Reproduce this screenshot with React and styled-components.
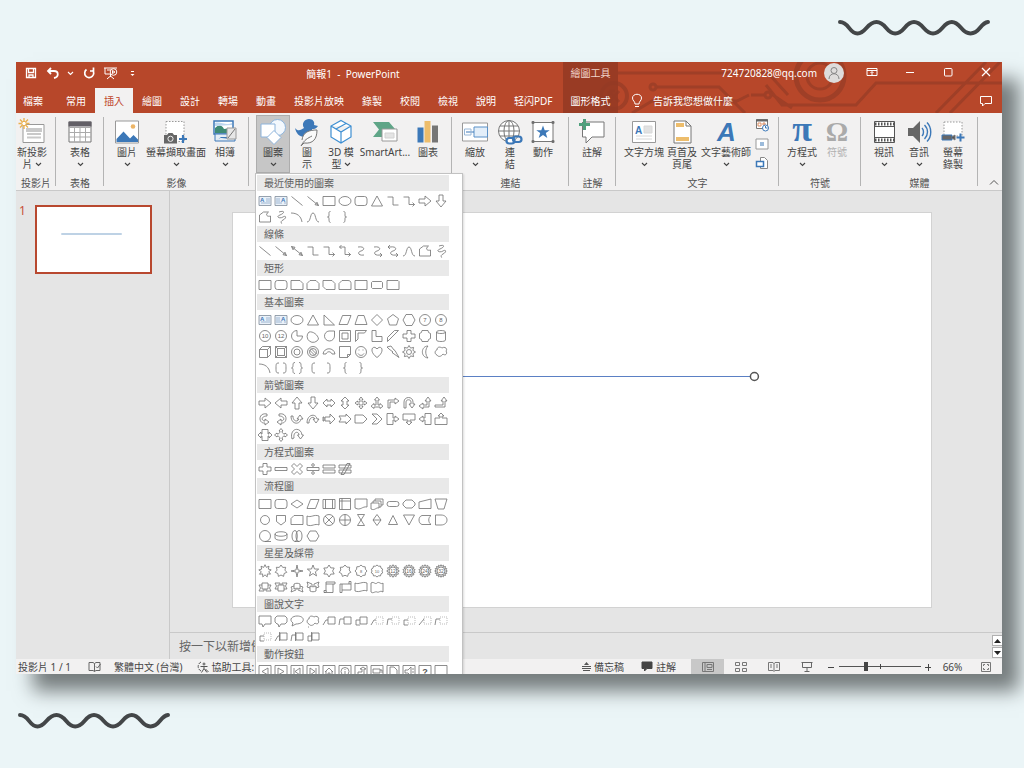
import React from 'react';
import styled, { createGlobalStyle, css } from 'styled-components';

const color = {
  page: '#ebf5f7',
  brand: '#b7472a',
  brandDark: '#943a24',
  brandLine: '#9f3f27',
  ribbon: '#f2f1f1',
  work: '#e5e5e5',
  line: '#c9c9c9',
  text: '#444444',
  blue: '#3c78b8',
  grey: '#767676',
};

const GlobalStyle = createGlobalStyle`
  * { box-sizing: border-box; }
  body {
    margin: 0;
    background: ${color.page};
    color: ${color.text};
    font: 10px/12px "Noto Sans", "Noto Sans CJK TC", sans-serif;
  }
  button, input { font: inherit; color: inherit; }
  svg { display: block; flex: none; }
`;

const plainButton = css`
  border: 0;
  padding: 0;
  background: none;
  white-space: nowrap;
`;

const Page = styled.div`
  display: flex;
  flex-direction: column;
  min-height: 100vh;
`;
const TopDecor = styled.div`
  display: flex;
  justify-content: flex-end;
  padding: 18px 32px 24px;
`;
const BottomDecor = styled.div`
  padding: 37px 16px;
`;
const AppWindow = styled.main`
  flex: 1;
  display: flex;
  flex-direction: column;
  margin: 0 22px 0 16px;
  overflow: hidden;
  background: ${color.work};
  box-shadow: 17px 17px 18px #757c7d;
`;

/* Title bar and tabs */
const Header = styled.header`
  position: relative;
  display: grid;
  grid-template-columns: minmax(0, 547fr) 55px minmax(0, 384fr);
  grid-template-rows: 26px 25px;
  background: ${color.brand};
  color: #fff;
`;
const Circuit = styled.svg`
  position: absolute;
  top: 0;
  right: 0;
  width: 440px;
  height: 51px;
`;
const HeaderCell = styled.div`
  position: relative;
  display: flex;
  align-items: ${p => p.$stretch ? 'stretch' : 'center'};
`;
const QuickAccess = styled.div`
  display: flex;
  align-items: center;
  width: 127px;
  padding: 0 2px 4px 7px;
  justify-content: space-between;
`;
const IconButton = styled.button`
  ${plainButton}
  display: flex;
  align-items: center;
  justify-content: center;
  width: ${p => p.$w || 16}px;
  height: 16px;
`;
const DocTitle = styled.h1`
  flex: 1;
  margin: 0;
  padding-bottom: 2px;
  font-size: 10px;
  font-weight: 400;
  text-align: center;
  white-space: pre;
`;
const ContextCell = styled.div`
  position: relative;
  display: flex;
  align-items: center;
  justify-content: center;
  background: ${color.brandDark}dd;
  color: #f1d5cc;
  padding-bottom: 4px;
`;
const Account = styled.div`
  display: flex;
  align-items: center;
  gap: 7px;
  margin: 0 12px 4px auto;
`;
const Avatar = styled.span`
  width: 20px;
  height: 20px;
  border-radius: 50%;
  background: #dedcdb;
`;
const WindowButtons = styled.div`
  display: flex;
  gap: 6px;
  padding-bottom: 6px;
`;
const Tab = styled.button`
  ${plainButton}
  padding: 0 9px;
  background: ${p => p.$active ? color.ribbon : 'none'};
  color: ${p => p.$active ? '#c0452a' : '#fff'};
  &:first-child { padding: 0 14px 0 7px; }
`;
const ContextTab = styled(Tab)`
  position: relative;
  background: ${color.brandDark}dd;
  &:first-child, & { padding: 0; }
`;
const TellMe = styled.button`
  ${plainButton}
  display: flex;
  align-items: center;
  gap: 10px;
  margin-left: 13px;
`;
const CommentButton = styled(IconButton)`
  margin-left: auto;
`;

/* Ribbon */
const Ribbon = styled.div`
  display: flex;
  height: 78px;
  background: ${color.ribbon};
  border-bottom: 1px solid ${color.line};
`;
const Group = styled.section`
  position: relative;
  flex: ${p => p.$w} 1 0;
  min-width: 0;
  display: flex;
  flex-direction: column;
  justify-content: space-between;
  padding: 2px 0 1px;
  &::after {
    content: '';
    position: absolute;
    inset: 4px 0 4px auto;
    border-right: 1px solid #b4b4b4;
  }
`;
const GroupTools = styled.div`
  display: flex;
  padding-left: ${p => p.$pad}px;
`;
const GroupLabel = styled.div`
  text-align: center;
  white-space: nowrap;
  color: #505050;
`;
const ToolSlot = styled.div`
  position: relative;
  flex: none;
  width: ${p => p.$w}px;
`;
const ToolButton = styled.button`
  ${plainButton}
  width: 100%;
  height: 58px;
  padding-top: 3px;
  display: flex;
  flex-direction: column;
  align-items: center;
  background: ${p => p.$active ? '#c6c6c6' : 'none'};
  outline: ${p => p.$active ? '1px solid #adadad' : 'none'};
  outline-offset: -1px;
  color: ${p => p.$dim ? '#b0b0b0' : color.text};
`;
const ToolLine = styled.span`
  display: flex;
  align-items: center;
  justify-content: center;
  gap: 2px;
  height: 12px;
`;
const SmallTools = styled.div`
  display: flex;
  flex-direction: column;
  gap: 3px;
  width: 20px;
  padding-top: 2px;
  align-items: center;
`;
const RibbonEnd = styled.div`
  flex: 24 1 0;
  min-width: 0;
  display: flex;
  align-items: flex-end;
  justify-content: flex-end;
`;

/* Shape gallery */
const Gallery = styled.div`
  position: absolute;
  z-index: 5;
  top: 100%;
  left: -1px;
  width: 208px;
  padding: 0 13px 0 1px;
  background: #fff;
  border: 1px solid #c2c2c2;
  box-shadow: 1px 1px 2px #00000022;
`;
const GalleryTitle = styled.h2`
  height: 18px;
  margin: 0;
  padding: 0 7px;
  display: flex;
  align-items: center;
  border: solid #fff;
  border-width: 1px 0;
  background: #e9e9e9;
  color: #606060;
  font-size: 10px;
  font-weight: 400;
`;
const ShapeGrid = styled.div`
  display: grid;
  grid-template-columns: repeat(12, 16px);
  padding-top: ${p => p.$tall ? 1 : 0}px;
`;
const ShapeButton = styled.button`
  ${plainButton}
  width: 16px;
  height: 16px;
`;

/* Work area */
const Workspace = styled.div`
  flex: 1;
  display: flex;
  min-height: 300px;
`;
const Thumbs = styled.nav`
  display: flex;
  align-items: flex-start;
  gap: 9px;
  width: 154px;
  padding: 14px 17px 0 3px;
  border-right: 1px solid ${color.line};
`;
const ThumbNumber = styled.span`
  width: 7px;
  color: #c8503a;
  font-size: 12px;
`;
const Thumb = styled.button`
  ${plainButton}
  flex: 1;
  height: 69px;
  border: 2px solid #b8482f;
  background: #fff;
`;
const Editor = styled.div`
  flex: 1;
  display: flex;
  flex-direction: column;
`;
const Stage = styled.div`
  flex: 1;
  display: flex;
  padding: 21px 70px 24px 62px;
`;
const Slide = styled.div`
  flex: 1;
  display: flex;
  background: #fff;
  border: 1px solid #d2d2d2;
`;
const Drawing = styled.svg`
  width: 100%;
  height: 100%;
`;
const Notes = styled.div`
  display: flex;
  justify-content: space-between;
  height: 27px;
  border-top: 1px solid ${color.line};
`;
const NotesInput = styled.input`
  flex: 1;
  border: 0;
  padding: 0 9px;
  background: none;
  font-size: 12px;
  &::placeholder { color: #666; opacity: 1; }
`;
const Scroller = styled.div`
  display: flex;
  flex-direction: column;
  justify-content: space-between;
  padding: 2px 0 1px;
`;
const ScrollButton = styled.button`
  ${plainButton}
  width: 10px;
  height: 11px;
  display: flex;
  align-items: center;
  justify-content: center;
  border: 1px solid #b0b0b0;
  border-right: 0;
  background: #fff;
`;

/* Status bar */
const StatusBar = styled.footer`
  display: flex;
  align-items: center;
  height: 15px;
  background: #f2f1f1;
  white-space: nowrap;
`;
const StatusLeft = styled.div`
  flex: 1;
  display: flex;
  align-items: center;
  gap: 13px;
  padding: 0 2px;
`;
const StatusButton = styled.button`
  ${plainButton}
  display: flex;
  align-items: center;
  gap: 3px;
  margin-right: ${p => p.$after || 0}px;
`;
const ViewButton = styled.button`
  ${plainButton}
  display: flex;
  align-items: center;
  justify-content: center;
  width: 33px;
  height: 15px;
  background: ${p => p.$active ? '#c8c8c8' : 'none'};
`;
const ZoomSlider = styled.input`
  appearance: none;
  width: 82px;
  height: 9px;
  margin: 0;
  background:
    linear-gradient(#444, #444) 41px 2px / 1px 5px no-repeat,
    linear-gradient(#555, #555) 0 4px / 100% 1px no-repeat;
  &::-webkit-slider-thumb {
    appearance: none;
    width: 4px;
    height: 9px;
    background: #444;
  }
`;
const ZoomValue = styled.button`
  ${plainButton}
  width: 35px;
`;

/* ---------- drawings ---------- */
const Wave = () => (
  <svg width="156" height="20" fill="none" stroke="#434648" strokeWidth="4" strokeLinecap="round" aria-hidden="true">
    <path d="M4 4C13 4 13 15.500 21.500 15.500S31 4 40.500 4S50 15.500 59.200 15.500S69 4 78 4S88 15.500 97 15.500S107 4 115.800 4S125 15.500 134.500 15.500S144 5 152 4" />
  </svg>
);
const Drawn = styled.svg`
  overflow: visible;
`;
const Ico = ({ w = 14, h, vb, s = 1, c = 'currentColor', children }) => (
  <Drawn width={w} height={h || w} viewBox={vb || `0 0 ${w} ${h || w}`} fill="none" stroke={c} strokeWidth={s} aria-hidden="true">{children}</Drawn>
);
const Chevron = ({ c = '#444' }) => <Ico w={7} h={5} c={c} s={1.1}><path d="M1 1l2.500 2.500L6 1" /></Ico>;

const B = color.blue;
const tool = {
  newSlide: <><path d="M5 6.500h21v18H5z" fill="#fff" stroke="#999" /><path d="M9 11h14v2H9zM9 16h14M9 19.500h14" stroke="#c9c9c9" strokeWidth="2" /><path d="M6 0v11M.5 5.500h11M2 1.500l8 8M10 1.500l-8 8" stroke="#eab04d" strokeWidth="1.300" /><circle cx="6" cy="5.500" r="2.200" fill="#fff" stroke="#eab04d" /></>,
  table: <><path d="M3 4h22v20H3z" fill="#fff" /><path d="M3 9.500h22M3 14.500h22M3 19h22M8.500 9v15M14 9v15M19.500 9v15" stroke="#aaa" /><path d="M2.500 3.500h23v5h-23z" fill="#625f66" stroke="none" /></>,
  picture: <><path d="M2.500 3h23v22h-23z" fill="#fff" stroke="#999" /><circle cx="20" cy="8.500" r="2.300" fill="#edb567" stroke="none" /><path d="M3.500 24v-3l7-7.500 6.500 7 3.500-3.500 4.500 4.500V24z" fill={B} stroke="none" /></>,
  screenshot: <><path d="M4 3.500h18v20H4z" fill="#fff" stroke="#999" strokeDasharray="1.500 1.500" /><path d="M2 17h3l1.500-2h4L12 17h3v8.500H2z" fill="#666" stroke="none" /><circle cx="8.500" cy="20.800" r="2.600" stroke="#eee" /><path d="M21 17v8M17 21h8" stroke={B} strokeWidth="2.200" /></>,
  album: <><path d="M3 3h19v13H3z" fill="#fff" stroke={B} strokeWidth="1.500" /><path d="M4 10c4-4 7-3 9 1l8-1v5H4z" fill="#3e8a74" stroke="none" /><path d="M4 5c5-2 11 3 17 0v2L4 8z" fill="#bed7ef" stroke="none" /><path d="M4 16h20v7H4z" fill="#e5edf5" stroke={B} /><path d="M6 22c5-5 9 1 12-3h-8z" fill={B} stroke="none" /><path d="M16 10h9v11h-9z" fill="#e7e7e7" stroke="#999" /><path d="M17 20l7-9" /></>,
  shapes: <><circle cx="18.500" cy="9.500" r="8" fill="#f3f8fd" stroke="#8db4dc" /><path d="M2 6h14v13H2z" fill="#fff" stroke="#8db4dc" /><path d="M15 12.500l7 7-7 7-7-7z" fill="#fff" stroke="#8db4dc" /></>,
  icons: <><path d="M2 10c3 4 6 2 9 0-3-5 1-9 5-9s6 3 5 6l4 1c-2 3-4 3-6 3 1 5-2 8-7 8C6 19 3 15 2 10z" fill={B} stroke="none" /><path d="M9 22c1-8 7-10 15-10 0 9-4 14-13 13l-3 3c3-6 7-8 11-10" fill="#fafafa" stroke="#777" /></>,
  cube: <path d="M14 2.500l10 5.500v11l-10 6-10-6V8zM4 8l10 6 10-6M14 14v11M19 5.500L9 11" fill="#fff" stroke="#3e8fd2" strokeWidth="1.200" />,
  smartart: <><path d="M2 4h16l6 7-7 8H2l6-7.500z" fill="#5fa587" stroke="none" /><path d="M11 11h15v12H11z" fill="#fff" stroke="#999" /><path d="M14 15h9v5h-9z" fill="#e4e4e4" stroke="#d2d2d2" /></>,
  chart: <g stroke="none"><path d="M3.500 9.500h6v15h-6z" fill={B} /><path d="M10.500 3h6v21.500h-6z" fill="#edbd6c" /><path d="M18 7.500h6v17h-6z" fill="#767676" /></g>,
  zoom: <><path d="M1.500 5h25v18h-25z" fill="#fff" stroke="#999" /><path d="M13 9h13.500v10H13z" fill="#e3eef9" stroke="#5b91c8" /><path d="M5 14h8" stroke={B} /><path d="M3.500 11h6.500v6H3.500z" stroke="#99b8d8" /></>,
  link: <><g stroke="#777"><circle cx="13" cy="13" r="10.500" fill="#fff" /><ellipse cx="13" cy="13" rx="5" ry="10.500" /><path d="M13 2.500v21M2.500 13h21M4 8h18M4 18h18" /></g><g stroke={B} strokeWidth="2.200"><rect x="10.500" y="20" width="8" height="5.500" rx="2.700" fill="#fff" /><rect x="17" y="18.500" width="8.500" height="5.500" rx="2.700" /></g></>,
  action: <><path d="M4 4.500h20v19H4z" fill="#fff" /><path d="M3 3.500h2v2H3zM23 3.500h2v2h-2zM3 22.500h2v2H3zM23 22.500h2v2h-2z" fill="#666" /><path d="M14 7.500l1.700 4.700h5L16.800 15l1.500 5-4.300-3-4.300 3 1.500-5-3.900-2.800h5z" fill={B} stroke="none" /></>,
  comment: <><path d="M5 4h21v15H14l-6 6v-6H4.500V4" fill="#fff" /><path d="M6.500 1v11M1 6.500h11" stroke="#4fa07d" strokeWidth="3" /></>,
  textbox: <><path d="M2.500 3.500h23v21h-23z" fill="#fff" stroke="#999" /><path d="M14 8h8v7h-8zM6 18h16M6 21h16" fill="#e2e2e2" stroke="#d8d8d8" /><text x="5" y="16" fontFamily="Liberation Sans, sans-serif" fontWeight="700" fontSize="10" fill={B} stroke="none">A</text></>,
  headerFooter: <><path d="M6 3h12l5 5v17H6z" fill="#fff" /><path d="M8 5h8v4H8zM8 19h13v4H8z" fill="#edbd6c" stroke="none" /><path d="M18 3v5h5" /></>,
  wordart: <text x="5" y="23" fontFamily="Liberation Sans, sans-serif" fontWeight="700" fontStyle="italic" fontSize="26" fill={B} stroke="none">A</text>,
  pi: <text x="14" y="23" textAnchor="middle" fontFamily="Liberation Serif, serif" fontWeight="700" fontSize="36" fill={B} stroke="none">π</text>,
  omega: <text x="14" y="23" textAnchor="middle" fontFamily="Liberation Serif, serif" fontWeight="700" fontSize="28" fill="#aaa" stroke="none">Ω</text>,
  video: <><path d="M4.500 3.500h20v21h-20z" fill="#fff" stroke="#555" /><path d="M5 6h19M5 22h19" stroke="#555" strokeWidth="3" strokeDasharray="1.500 1.500" /><path d="M5 8.500h19M5 19.500h19" stroke="#555" /></>,
  audio: <><path d="M3 10h5l7-7v22l-7-7H3z" fill="#666" stroke="none" /><path d="M17 10c2 2 2 6 0 8M19.500 7c4 4 4 10 0 14M22 4.500c5 5 5 14 0 19" stroke={B} strokeWidth="1.400" /></>,
  record: <><path d="M5 4h18v14H5z" fill="#fff" stroke="#999" strokeDasharray="1.500 1.500" /><path d="M3 17h10v5H3z" fill="#666" stroke={B} /><path d="M13 19l3-2v5l-3-2" fill="#555" /><path d="M21.500 15.500v8M17.500 19.500h8" stroke={B} strokeWidth="2" /></>,
};

/* Shape gallery outlines, each in a 16 by 16 cell */
const radial = (n, r1, r2) => {
  const pts = [];
  for (let i = 0; i < n * 2; i += 1) {
    const r = i % 2 ? r2 : r1;
    const a = (Math.PI * i) / n - Math.PI / 2;
    pts.push(`${(8 + r * Math.cos(a)).toFixed(1)} ${(8 + r * Math.sin(a)).toFixed(1)}`);
  }
  return `M${pts.join('L')}z`;
};
const circle = (r, x = 8, y = 8) => `M${x - r} ${y}a${r} ${r} 0 1 0 ${2 * r} 0a${r} ${r} 0 1 0 ${-2 * r} 0z`;
const num = (t, d = circle(5.5), size = 6) => (
  <><path d={d} /><text x="8" y="10.200" textAnchor="middle" fontFamily="Liberation Sans, sans-serif" fontSize={size} fill="#666" stroke="none">{t}</text></>
);
const textShape = vertical => (
  <><path d="M2 3.500h12v9H2z" fill="#eaf1f9" stroke="#7f8b99" /><path d={vertical ? 'M4 5v6M6 5v6M8 9v2M12 9v2' : 'M9 6h4M9 8h4M4 10h9'} stroke="#8aa8c9" /><text x={vertical ? 8 : 3} y="9" fontFamily="Liberation Sans, sans-serif" fontWeight="700" fontSize="6" fill={B} stroke="none">A</text></>
);
const rect = 'M2 3.500h12v9H2z';
const round = 'M4.500 3.500h7a2.500 2.500 0 0 1 2.500 2.500v4a2.500 2.500 0 0 1-2.500 2.500h-7A2.500 2.500 0 0 1 2 10V6a2.500 2.500 0 0 1 2.500-2.500z';
const oval = 'M2 8a6 4.500 0 1 0 12 0a6 4.500 0 1 0-12 0z';
const tri = 'M8 3l5.500 10h-11z';
const ln = 'M2.500 3.500l11 9';
const lnA = 'M2.500 3.500l11 9M13.500 12.500l-3.500-.8 2-2.500z';
const lnD = `${lnA}M2.500 3.500l3.500.8-2 2.500z`;
const el = 'M2.500 4h5.500v8h5.500';
const elA = 'M2.500 4h5.500v7.500h5.500M11.500 9.500l2 2-2 2';
const elD = 'M2.500 4h5.500v7.500h5.500M11.500 9.500l2 2-2 2M4.500 2l-2 2 2 2';
const cv = 'M5 4c7-1 7 3 3 4s-3 5 3 4';
const cvA = `${cv}h2M11 10l2 2-2 2`;
const cvD = `${cvA}M5 2L3 4l2 2M3 4h2`;
const wave = 'M2 13c4 0 3-9 6-9s2 9 6 9';
const free = 'M2.500 13V6l4-3h5c-4 3-1 5 2 4v6z';
const scrib = 'M6 3c6-2 6 1 1 3s0 4 3 2 4 1 0 3 0 4-2 3';
const arc = 'M2 4c6 0 10 3 11 9';
const brL = 'M9.500 2.500C7.500 2.500 8 4 8 6s-.5 2-1.500 2C8 8 8 8.500 8 10s0 3.500 1.500 3.500';
const brR = 'M6.500 2.500C8.500 2.500 8 4 8 6s.5 2 1.500 2C8 8 8 8.500 8 10s0 3.500-1.500 3.500';
const aR = 'M2 6h6V3l6 5-6 5v-3H2z';
const aL = 'M14 6H8V3L2 8l6 5v-3h6z';
const aU = 'M6 14V8H3l5-6 5 6h-3v6z';
const aD = 'M6 2v6H3l5 6 5-6h-3V2z';
const plus = 'M6 2.500h4V6h4v4h-4v3.500H6V10H2V6h4z';
const hex = 'M5 3.500h6L14 8l-3 4.500H5L2 8z';
const para = 'M5.500 3.500H14L10.500 12.500H2z';
const diamond = 'M8 2.500L13.500 8 8 13.500 2.500 8z';
const dash = d => <path d={d} strokeDasharray="1 1" />;
const callouts = (() => {
  const box = 'M7 4h7v7H7z';
  const tails = ['M2 12l3-5h2', 'M2 12l1-6h4', 'M7 12H3V7h4', 'M2 12l5-6'];
  const list = [];
  [0, 1, 2].forEach(i => list.push(`${box}${tails[i]}`));
  [0, 1, 2, 3, 1, 2].forEach(i => list.push(<><path d={tails[i]} /><g stroke="#aaa">{dash(box)}</g></>));
  [0, 1, 2].forEach(i => list.push(`${box}${tails[i]}M6.500 3v9`));
  return list;
})();
const actionBox = d => `M2 2.500h12v12H2z${d}`;

const gallery = [
  ['最近使用的圖案', [textShape(false), textShape(true), ln, lnA, rect, oval, round, tri, el, elA, aR, aD, free, scrib, arc, wave, brL, brR]],
  ['線條', [ln, lnA, lnD, el, elA, elD, cv, cvA, cvD, wave, free, scrib]],
  ['矩形', [rect, round, 'M2 3.500h9l3 3v6H2z', 'M5 3.500h6l3 3v6H2v-6z', 'M4 3.500h7l3 3v6H5l-3-3v-6z', 'M5 3.500h6c2 0 3 1 3 3v6H2v-6z', rect, 'M3.500 4.500h9l1 1v5l-1 1h-9l-1-1v-5z', 'M2 3.500h11l1 1v8H2z']],
  ['基本圖案', [
    textShape(false), textShape(true), oval, tri, 'M3 3v10h10.500z', para, 'M5 3.500h6l3 9H2z', diamond, 'M8 2.500l5.500 4.200-2 6.300h-7l-2-6.300z', 'M5 2.500h6L14 8l-3 5.500H5L2 8z', num('7'), num('8'),
    num('10'), num('12'), 'M8 2.500V8h5.500A5.500 5.500 0 1 1 8 2.500z', 'M4 4a6 6 0 1 0 9.500 7C13 7 8 3 4 4z', 'M13.500 3H8a5 5 0 1 0 5.500 5z', 'M2.500 2.500h11v11h-11zM5 5h6v6H5z', 'M2.500 13.500v-11h11l-2 2.500H5v6z', 'M3 2.500h4v6h6v5H3z', 'M2.500 13.500v-4l7-7h4z', plus, 'M5 2.500h6a3 3 0 0 0 2.500 3v5a3 3 0 0 0-2.500 3H5a3 3 0 0 0-2.500-3v-5A3 3 0 0 0 5 2.500z', 'M3.500 4c0-2 9-2 9 0v8c0 2-9 2-9 0zM3.500 4c0 2 9 2 9 0',
    'M2.500 5.500h8v8h-8zl3-3h8l-3 3M13.500 2.500v8l-3 3', 'M2.500 2.500h11v11h-11zM4.500 4.500h7v7h-7zM2.500 2.500l2 2M13.500 2.500l-2 2M2.500 13.500l2-2M13.500 13.500l-2-2', circle(5.5) + circle(3), `${circle(5.5)}${circle(3.5)}M4.500 6l5.500 5.500M6 4.500l5.500 5.500`, 'M2 10c1-7 11-7 12 0h-3c-1-3-5-3-6 0z', 'M2.500 2.500h11v8l-3 3h-8zM10.500 13.500v-3h3', `${circle(5.5)}M5 9.500c1.500 2.500 4.500 2.500 6 0M6 5.500v1M10 5.500v1`, 'M8 13.500C-1 7 4 0 8 5c4-5 9 2 0 8.500z', 'M2 3l4-1 3 4 1 .5 4 7-7-5 1-.5-4-3z', `${radial(8, 6.5, 4.2)}${circle(2.5)}`, 'M11 2C4 2 3 13 11 14 8 11 8 5 11 2z', 'M4 11C1 10 2 6 4 6c0-4 4-3 5-2 3-2 6 1 4 3 2 3-1 5-3 3-2 3-5 3-6 1z',
    arc, 'M6 3C3 3 3 4 3 8s0 5 3 5M10 3c3 0 3 1 3 5s0 5-3 5', 'M6 2.500c-2 0-2 1-2 3S3 8 2.500 8C4 8 4 9 4 10.500s0 3 2 3M10 2.500c2 0 2 1 2 3s1 2.500 1.500 2.500C12 8 12 9 12 10.500s0 3-2 3', 'M10 3C7 3 7 4 7 8s0 5 3 5', 'M6 3c3 0 3 1 3 5s0 5-3 5', brL, brR]],
  ['箭號圖案', [
    aR, aL, aU, aD, 'M2 8l4-4v2h4V4l4 4-4 4v-2H6v2z', 'M8 2l4 4h-2v4h2l-4 4-4-4h2V6H4z', 'M8 2l2 2.500H9V7h2.500V6L14 8l-2.500 2V9H9v2.500h1L8 14l-2-2.500h1V9H4.500v1L2 8l2.500-2v1H7V4.500H6z', 'M8 2l2.500 3H9v5h2V8.500l3 2.700-3 2.300V12H5v1.500l-3-2.300L5 8.500V10h2V5H5.500z', 'M3 13V5h7V3l4 3-4 3V7H5v6z', 'M3 13V7c0-6 9-6 9 0v2h2l-3 4-3-4h2V7c0-3-5-3-5 0v6z', 'M2 11l4-3v2h4V6H8l3-4 3 4h-2v6H6v2z', 'M2 10h8V6H8l3-4 3 4h-2v6H2z',
    'M10 3C1 1 1 13 8 12v2l4-3-4-3v2C4 10 4 5 10 5z', 'M6 3c9-2 9 10 2 9v2l-4-3 4-3v2c4 0 4-5-2-5z', 'M2 5c0 9 9 9 10 3h2l-3-4-3 4h2c-1 3-6 3-6-3z', 'M2 12c0-9 9-10 10-4h2l-3 4-3-4h2c-1-3-6-2-6 4z', 'M2 6h1v4H2zM4 6h5V3l5 5-5 5v-3H4z', 'M2 5h7V3l5 5-5 5v-2H2l2-3z', 'M2 4h8l4 4-4 4H2z', 'M3 3h5l5 5-5 5H3l5-5z', 'M2 2.500h6V7h2V5l4 3-4 3V9H8v4.500H2z', 'M2 3h12v6H9v2h2l-3 3-3-3h2V9H2z', 'M14 2.500H8V7H6V5L2 8l4 3V9h2v4.500h6z', 'M2 13.500h12V7H9V5h2L8 2 5 5h2v2H2z',
    'M5 2.500h6V7h1V5l3 3-3 3V9h-1v4.500H5V9H4v2L1 8l3-3v2h1z', 'M8 1.500l2 2.500H9c0 2 1 3 3 3V6l2.500 2-2.500 2V9c-2 0-3 1-3 3h1l-2 2.500L6 12h1c0-2-1-3-3-3v1L1.500 8 4 6v1c2 0 3-1 3-3H6z', 'M3 12c-3-11 9-13 10-4h1.500l-3 4-3-4H10c0-4-6-4-5 3z']],
  ['方程式圖案', [plus, 'M2 6.500h12v3H2z', 'M5 2.500l3 3 3-3 2.500 2.500-3 3 3 3-2.500 2.500-3-3-3 3L2.500 11l3-3-3-3z', `M2 6.500h12v3H2z${circle(1.3, 8, 4)}${circle(1.3, 8, 12)}`, 'M2 4h12v3H2zM2 9h12v3H2z', 'M2 4h12v3H2zM2 9h12v3H2zM4 13.500l6-11h3l-6 11z']],
  ['流程圖', [
    rect, round, 'M8 4l6 4-6 4-6-4z', para, `${rect}M4.500 3.500v9M11.500 3.500v9`, 'M2.500 2.500h11v11h-11zM5 2.500v11M2.500 5h11', 'M2 3h12v8c-5-1-6 4-12 1z', 'M2 7h8v5c-3-1-4 3-8 1zM4 7V5h8v6h-2M6 5V3h8v6h-2', 'M4.500 5.500h7a2.500 2.500 0 0 1 0 5h-7a2.500 2.500 0 0 1 0-5z', 'M5 4h6l3 3v2l-3 3H5L2 9V7z', 'M2 6l12-3v9.500H2z', 'M2 3h12l-3 10H5z',
    circle(4.5), 'M3.500 3.500h9v6L8 13l-4.500-3.500z', 'M5 3.500h9v9H2v-6z', 'M2 4c4 2 7-2 12 0v9c-4-2-7 2-12 0z', `${circle(5.5)}M4 4l8 8M12 4l-8 8`, `${circle(5.5)}M2.500 8h11M8 2.500v11`, 'M4.500 2.500h7l-7 11h7z', 'M8 2.500L12 8l-4 5.500L4 8zM4 8h8', 'M8 3.500l4.500 9h-9z', 'M2.500 3h11L8 13z', 'M5 3.500h9c-3 2-3 7 0 9H5c-4-1-4-8 0-9z', 'M2.500 3H8c8 0 8 10 0 10H2.500z',
    `${circle(5.5)}M8 13.500h6`, 'M2 6c0-3 12-3 12 0v4c0 3-12 3-12 0zM2 6c0 3 12 3 12 0', 'M6 2.500c-4 0-4 11 0 11h4c4 0 4-11 0-11-4 0-4 11 0 11M6 2.500c3 0 3 11 0 11', 'M5 3h6l3 5-3 5H5L2 8z']],
  ['星星及綵帶', [
    radial(9, 6.3, 3.8), radial(7, 6, 4), radial(4, 6, 1.4), radial(5, 6, 2.5), radial(6, 6, 3.6), radial(7, 6, 4.3), num('8', radial(8, 6, 4.8), 4), num('10', radial(10, 6, 5), 4), num('12', `${radial(12, 6.3, 4.8)}${circle(4)}`, 5), num('16', `${radial(14, 6.3, 4.8)}${circle(4)}`, 5), num('24', `${radial(14, 6.3, 4.8)}${circle(4)}`, 5), num('32', `${radial(16, 6.3, 4.8)}${circle(4)}`, 5),
    'M5 4h6v6H5zM5 6H2l1.500 3L2 12h5v-2M11 6h3l-1.500 3 1.500 3H9v-2', 'M5 6h6v6H5zM5 10H2l1.500-3L2 4h5v2M11 10h3l-1.500-3L14 4H9v2', 'M5 5c2-1 4-1 6 0v5c-2-1-4-1-6 0zM5 7l-3 1 1 2-1 3 5-2v-1M11 7l3 1-1 2 1 3-5-2v-1', 'M5 7c2 1 4 1 6 0v5c-2 1-4 1-6 0zM5 9L2 8l1-2-1-3 5 2v2M11 9l3-1-1-2 1-3-5 2v2', 'M5 3h9v2h-2v8.500H3v-2h2zM3 13.500c3 0 3-2 2-2M12 5H5', 'M3 5h11v6H5v2.500H3zM14 5V2.500h-2V5M5 11V5', 'M2 4c4 2 7-2 12 0v8c-4-2-7 2-12 0z', 'M2 4c3-2 4 2 6 0s4 2 6 0v9c-3-2-4 1-6 0s-4 2-6 0z']],
  ['圖說文字', ['M2 3h12v8H8l-2 3-1-3H2z', `M4 3h8l2 2v4l-2 2H8l-2 3-1-3H4L2 9V5z`, 'M3 13l1-3C-1 6 4 3 8 3c9 0 8 8-1 8z', 'M4 11C1 10 2 6 4 6c0-4 4-3 5-2 3-2 6 1 4 3 2 3-1 5-3 3-2 3-5 3-6 1zM3 14h1', ...callouts]],
  ['動作按鈕', [
    actionBox('M11 5v7L5 8.500z'), actionBox('M5 5v7l6-3.500z'), actionBox('M11 5v7L6 8.500zM5 5v7'), actionBox('M5 5v7l5-3.500zM11 5v7'), actionBox('M4 9l4-4 4 4M5 8v5h6V8M7 13v-3h2v3'), actionBox(`${circle(4, 8, 8.5)}M8 8v3M8 6v1`), actionBox('M5 12V9h4V6H7l3-2 3 2h-2v6z'), actionBox('M4 6h7v4H4zM11 7h2v3'), actionBox('M5 4h4l3 3v6H5z'), actionBox('M4 7h3l3-3v9l-3-3H4zM11 6h2M11 9h2'), <><path d={actionBox('')} /><text x="8" y="12" textAnchor="middle" fontFamily="Liberation Sans, sans-serif" fontWeight="700" fontSize="9" fill="#555" stroke="none">?</text></>, actionBox('')]],
];

const ShapeGallery = () => (
  <Gallery>
    {gallery.map(([title, shapes]) => (
      <section key={title}>
        <GalleryTitle>{title}</GalleryTitle>
        <ShapeGrid $tall={shapes.length > 16}>
          {shapes.map((shape, i) => (
            <ShapeButton key={i} aria-label={`${title} ${i + 1}`}>
              <Ico w={16} s={0.8} c="#707070">{typeof shape === 'string' ? <path d={shape} /> : shape}</Ico>
            </ShapeButton>
          ))}
        </ShapeGrid>
      </section>
    ))}
  </Gallery>
);

const ribbon = [
  { w: 40, pad: 0, label: '投影片', tools: [['newSlide', 32, ['新投影', '片'], 1]] },
  { w: 48, pad: 4, label: '表格', tools: [['table', 40, ['表格', ''], 1]] },
  { w: 145, pad: 3, label: '影像', tools: [['picture', 40, ['圖片', ''], 1], ['screenshot', 58, ['螢幕擷取畫面', ''], 1], ['album', 40, ['相簿', ''], 1]] },
  { w: 203, pad: 7, label: '', tools: [['shapes', 34, ['圖案', ''], 1], ['icons', 34, ['圖', '示']], ['cube', 34, ['3D 模', '型'], 1], ['smartart', 54, ['SmartArt...']], ['chart', 32, ['圖表']]] },
  { w: 117, pad: 3, label: '連結', tools: [['zoom', 40, ['縮放', ''], 1], ['link', 30, ['連', '結']], ['action', 36, ['動作']]] },
  { w: 47, pad: 3, label: '註解', tools: [['comment', 40, ['註解']]] },
  { w: 163, pad: 8, label: '文字', extra: true, tools: [['textbox', 40, ['文字方塊', ''], 1], ['headerFooter', 36, ['頁首及', '頁尾']], ['wordart', 52, ['文字藝術師', ''], 1]] },
  { w: 82, pad: 3, label: '符號', tools: [['pi', 40, ['方程式', ''], 1], ['omega', 30, ['符號']]] },
  { w: 117, pad: 3, label: '媒體', tools: [['video', 40, ['視訊', ''], 1], ['audio', 30, ['音訊', ''], 1], ['record', 38, ['螢幕', '錄製']]] },
];

const Tool = ({ name, width, lines, menu }) => (
  <ToolSlot $w={width}>
    <ToolButton $active={name === 'shapes'} $dim={name === 'omega'}>
      <Ico w={28} c="#777">{tool[name]}</Ico>
      {lines.map((text, i) => (
        <ToolLine key={i}>{text}{menu && i === lines.length - 1 ? <Chevron /> : null}</ToolLine>
      ))}
    </ToolButton>
    {name === 'shapes' && <ShapeGallery />}
  </ToolSlot>
);

const tabs = ['檔案', '常用', '插入', '繪圖', '設計', '轉場', '動畫', '投影片放映', '錄製', '校閱', '檢視', '說明', '轻闪PDF'];

export default function App() {
  return (
    <Page>
      <GlobalStyle />
      <TopDecor><Wave /></TopDecor>
      <AppWindow>
        <Header>
          <Circuit viewBox="0 0 440 51" fill="none" stroke={color.brandLine} strokeWidth="3" aria-hidden="true">
            <circle cx="52" cy="34" r="13" strokeWidth="4" />
            <path d="M47 40l10-11M47 29l10 11M47 29h6M47 29v6M56 11h150l20 22M95 25h62l26 26M70 51l20-12h85l12-6M203 33h-14M208 31l22 15M204 23l16 20h74l20-22h126M374 51l50-51M388 51l50-51" />
            <circle cx="91" cy="25" r="3" />
            <circle cx="206" cy="33" r="3" />
            <circle cx="258" cy="14" r="24" strokeWidth="5" />
            <circle cx="258" cy="14" r="13" />
          </Circuit>
          <HeaderCell>
            <QuickAccess>
              <IconButton aria-label="儲存檔案"><Ico w={12} s={1.3}><path d="M1.500 1.500h9v9h-9zM3.500 1.500v4h5v-4M4 10.500V8h4v2.500" /></Ico></IconButton>
              <IconButton aria-label="復原"><Ico w={14} s={1.8}><path d="M5 2L2 5l3 3M2 5h6c5 0 5 6 0 7" /></Ico></IconButton>
              <Chevron c="#fff" />
              <IconButton aria-label="重複"><Ico w={14} s={1.7}><path d="M10.500 4a4.500 4.500 0 1 1-6-.5M8 5h3.500V1.500" /></Ico></IconButton>
              <IconButton aria-label="播放"><Ico w={15} h={14}><path d="M1 2h13M2 2v6h6M4 4h4M7.500 8v3M4 13l3.500-3 3.500 3" /><circle cx="10.500" cy="6" r="3.300" /><path d="M9.500 4.500v3l2.500-1.500z" /></Ico></IconButton>
              <IconButton aria-label="自訂"><Ico w={7} h={7}><path d="M2 1.500h3" /><path d="M1.500 4h4l-2 2z" fill="#fff" stroke="none" /></Ico></IconButton>
            </QuickAccess>
            <DocTitle>{'簡報1  -  PowerPoint'}</DocTitle>
          </HeaderCell>
          <ContextCell>繪圖工具</ContextCell>
          <HeaderCell>
            <Account>
              <span>724720828@qq.com</span>
              <Avatar><Ico w={20} c="#858585"><circle cx="10" cy="7.500" r="3" /><path d="M5 16c0-7 10-7 10 0" /></Ico></Avatar>
            </Account>
            <WindowButtons>
              <IconButton $w={32} aria-label="功能區顯示選項"><Ico w={12} h={10}><path d="M1 1.500h10v7H1zM1 3.500h10M6 8V5M4.500 6L6 4.500 7.500 6" /></Ico></IconButton>
              <IconButton $w={32} aria-label="最小化"><Ico w={10}><path d="M1 5.500h8" /></Ico></IconButton>
              <IconButton $w={32} aria-label="最大化"><Ico w={10}><rect x="1.500" y="1.500" width="7.500" height="7.500" rx="1" /></Ico></IconButton>
              <IconButton $w={32} aria-label="關閉"><Ico w={10} s={1.2}><path d="M1 1l8 8M9 1L1 9" /></Ico></IconButton>
            </WindowButtons>
          </HeaderCell>
          <HeaderCell $stretch>
            {tabs.map(t => <Tab key={t} $active={t === '插入'}>{t}</Tab>)}
          </HeaderCell>
          <ContextTab>圖形格式</ContextTab>
          <HeaderCell>
            <TellMe>
              <Ico w={12} h={15}><path d="M4 11c0-3-2.500-3-2.500-6 0-5 9-5 9 0 0 3-2.500 3-2.500 6zM4 13.500h4" /></Ico>
              告訴我您想做什麼
            </TellMe>
            <CommentButton $w={32} aria-label="註解"><Ico w={14} h={12}><path d="M1.500 1.500h11v7H6l-2.500 2.500V8.500h-2z" /></Ico></CommentButton>
          </HeaderCell>
        </Header>

        <Ribbon>
          {ribbon.map((g, i) => (
            <Group key={i} $w={g.w}>
              <GroupTools $pad={g.pad}>
                {g.tools.map(([name, width, lines, menu]) => <Tool key={name} name={name} width={width} lines={lines} menu={menu} />)}
                {g.extra && (
                  <SmallTools>
                    <IconButton aria-label="日期及時間"><Ico w={14} c="#777"><path d="M1.500 1.500h11v9h-11z" fill="#fff" /><path d="M1 2.500h12" stroke="#666" strokeWidth="2" /><path d="M3 5h3v3H3zM8 5h2v2H8z" stroke="#dc8d62" /><circle cx="10.500" cy="10" r="3" fill="#fff" stroke={B} /><path d="M10.500 8v2h2" stroke={B} /></Ico></IconButton>
                    <IconButton aria-label="投影片編號"><Ico w={14} c="#999"><path d="M1 2h12v10H1z" fill="#fff" /><path d="M5 6h4M5 8h4M6 5v4M8 5v4" stroke={B} strokeWidth="0.600" /></Ico></IconButton>
                    <IconButton aria-label="物件"><Ico w={14} c={B}><path d="M5.500 1.500h4l3 3v8h-7z" fill="#fff" stroke="#888" /><path d="M1.500 5.500h7v5h-7z" fill="#fff" strokeWidth="1.500" /></Ico></IconButton>
                  </SmallTools>
                )}
              </GroupTools>
              <GroupLabel>{g.label}</GroupLabel>
            </Group>
          ))}
          <RibbonEnd><IconButton aria-label="摺疊功能區"><Ico w={10} h={7} c="#555"><path d="M1 5.500l4-4 4 4" /></Ico></IconButton></RibbonEnd>
        </Ribbon>

        <Workspace>
          <Thumbs>
            <ThumbNumber>1</ThumbNumber>
            <Thumb aria-label="投影片 1">
              <Drawing><line x1="21.500%" y1="41.500%" x2="75%" y2="41.500%" stroke="#a9c3dc" strokeWidth="1.500" /></Drawing>
            </Thumb>
          </Thumbs>
          <Editor>
            <Stage>
              <Slide>
                <Drawing>
                  <line x1="21.500%" y1="41.500%" x2="74.700%" y2="41.500%" stroke="#5b80c4" strokeWidth="1" />
                  <circle cx="74.700%" cy="41.500%" r="4" fill="#fff" stroke="#555" strokeWidth="1.500" />
                </Drawing>
              </Slide>
            </Stage>
            <Notes>
              <NotesInput placeholder="按一下以新增備忘稿" aria-label="備忘稿" />
              <Scroller>
                <ScrollButton aria-label="上一張"><Ico w={7} h={4}><path d="M0 4l3.500-4L7 4z" fill="#222" stroke="none" /></Ico></ScrollButton>
                <ScrollButton aria-label="下一張"><Ico w={7} h={4}><path d="M0 0l3.500 4L7 0z" fill="#222" stroke="none" /></Ico></ScrollButton>
              </Scroller>
            </Notes>
          </Editor>
        </Workspace>

        <StatusBar>
          <StatusLeft>
            <StatusButton $after={4}>投影片 1 / 1</StatusButton>
            <StatusButton aria-label="拼字檢查"><Ico w={13} h={11} c="#666"><path d="M1 1.500h4l1.500 1L8 1.500h4v8H8l-1.500 1-1.500-1H1zM6.500 2.500v8M8 5.500l1.500 1.500 3-4" /></Ico></StatusButton>
            <StatusButton>繁體中文 (台灣)</StatusButton>
            <StatusButton><Ico w={13} c="#555"><path d="M5 2a5 5 0 0 0 0 9" strokeDasharray="3 1" /><circle cx="8" cy="4" r="1" /><path d="M4.500 6.500h7M8 6v2.500l-2.500 4M8 8.500l3 4M9.500 9l3 3" /></Ico>協助工具:</StatusButton>
          </StatusLeft>
          <StatusButton $after={17}><Ico w={9} h={9} c="#555"><path d="M0 4.500h9M0 6.500h9M1 8.500h7" /><path d="M4.500 0L7 3H2z" fill="#555" stroke="none" /></Ico>備忘稿</StatusButton>
          <StatusButton $after={15}><Ico w={12} h={11}><path d="M1 1h10v6.500H6L3.500 10V7.500H1z" fill="#444" /></Ico>註解</StatusButton>
          <ViewButton $active aria-label="標準"><Ico w={12} c="#777"><path d="M.5 1.500h11v9H.5zM3 1.500v9M5 3.500h5v3H5zM5 8.500h5" /></Ico></ViewButton>
          <ViewButton aria-label="投影片瀏覽"><Ico w={12} c="#777"><path d="M.5 1.500h4v3h-4zM7.500 1.500h4v3h-4zM.5 7.500h4v3h-4zM7.500 7.500h4v3h-4z" /></Ico></ViewButton>
          <ViewButton aria-label="閱讀檢視"><Ico w={12} c="#777"><path d="M.5 1.500H5l1 1 1-1h4.500v8H7l-1 1-1-1H.5zM6 2v8M2 4h2M2 6h2M8 4h2M8 6h2" /></Ico></ViewButton>
          <ViewButton aria-label="投影片放映"><Ico w={12} c="#666"><path d="M.5 1.500h11M1.500 1.500v5h9v-5M6 6.500v4M3.500 10.500h5" /></Ico></ViewButton>
          <IconButton aria-label="縮小"><Ico w={8}><path d="M1 4.500h6" /></Ico></IconButton>
          <ZoomSlider type="range" min="0" max="100" defaultValue="32" aria-label="縮放" />
          <IconButton $w={14} aria-label="放大"><Ico w={8}><path d="M1 4.500h6M4.500 1v7" /></Ico></IconButton>
          <ZoomValue>66%</ZoomValue>
          <IconButton $w={32} aria-label="調整至視窗大小"><Ico w={10} c="#777"><path d="M.5.5h9v9h-9zM2.500 4V2.500H4M6 2.500h1.500V4M7.500 6v1.500H6M4 7.500H2.500V6" /></Ico></IconButton>
        </StatusBar>
      </AppWindow>
      <BottomDecor><Wave /></BottomDecor>
    </Page>
  );
}
